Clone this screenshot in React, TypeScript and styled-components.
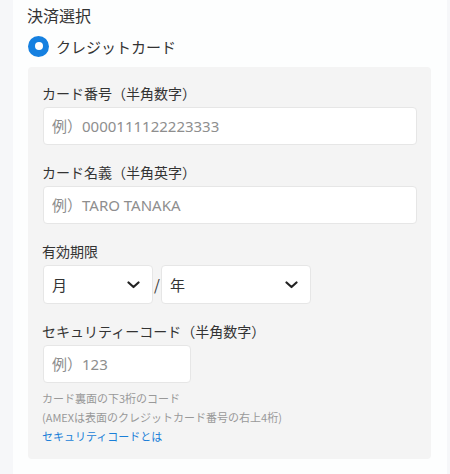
import React from 'react';
import styled, { createGlobalStyle } from 'styled-components';

const GlobalStyle = createGlobalStyle`
  html, body {
    margin: 0;
    padding: 0;
    background: #f6f7f9;
  }
  body {
    font-family: "Noto Sans CJK JP", "Noto Sans", sans-serif;
    color: #333;
  }
`;

const Page = styled.div`
  margin-left: 13px;
  width: 434px;
  min-height: 474px;
  box-sizing: border-box;
  background: #fdfefe;
  padding: 3px 16px 16px 14px;
`;

const Heading = styled.h2`
  margin: 0;
  font-size: 16px;
  line-height: 24px;
  font-weight: 400;
  color: #333;
`;

const RadioRow = styled.label`
  display: flex;
  align-items: center;
  gap: 7px;
  margin: 7px 0 0 1px;
  height: 24px;
  font-size: 15px;
  color: #333;
`;

const RadioDot = styled.span`
  width: 21px;
  height: 21px;
  border-radius: 50%;
  background: #1580e0;
  display: flex;
  align-items: center;
  justify-content: center;
  &::after {
    content: '';
    width: 8px;
    height: 8px;
    border-radius: 50%;
    background: #fff;
  }
`;

const Panel = styled.div`
  margin: 9px 0 0 1px;
  background: #f4f4f4;
  border-radius: 4px;
  padding: 16px 14px 13px 14px;
  display: flex;
  flex-direction: column;
`;

const Field = styled.div<{ $last?: boolean }>`
  display: flex;
  flex-direction: column;
  margin-bottom: ${p => (p.$last ? '0' : '17px')};
`;

const Label = styled.div`
  font-size: 14px;
  line-height: 20px;
  color: #333;
  margin-bottom: 4px;
`;

const Input = styled.input<{ $width?: number }>`
  box-sizing: border-box;
  width: ${p => (p.$width ? `${p.$width}px` : 'calc(100% - 1px)')};
  height: 38px;
  margin-left: 1px;
  border: 1px solid #e6e6e6;
  border-radius: 4px;
  background: #fff;
  padding: 0 8px;
  font-family: "Noto Sans", "Noto Sans CJK JP", sans-serif;
  font-size: 15px;
  color: #333;
  outline: none;
  &::placeholder {
    color: #8e8e8e;
  }
`;

const DateRow = styled.div`
  display: flex;
  align-items: center;
  margin-left: 1px;
`;

const Select = styled.div<{ $width: number }>`
  box-sizing: border-box;
  width: ${p => p.$width}px;
  height: 39px;
  border: 1px solid #e6e6e6;
  border-radius: 4px;
  background: #fff;
  display: flex;
  align-items: center;
  justify-content: space-between;
  padding: 0 12px 0 8px;
  font-size: 15px;
  color: #333;
`;

const Slash = styled.span`
  width: 8px;
  text-align: center;
  font-size: 15px;
  color: #333;
`;

const Help = styled.div`
  margin-top: 6px;
  font-size: 11px;
  line-height: 19px;
  color: #999;
`;

const HelpLink = styled.a`
  display: block;
  color: #1a7fd8;
  text-decoration: none;
`;

const Chevron = () => (
  <svg width="13" height="8" viewBox="0 0 13 8">
    <polyline points="1.5,1.5 6.5,6 11.5,1.5" fill="none" stroke="#222" strokeWidth="2.2" strokeLinecap="round" strokeLinejoin="round" />
  </svg>
);

export default function App() {
  return (
    <>
      <GlobalStyle />
      <Page>
        <Heading>決済選択</Heading>
        <RadioRow>
          <RadioDot />
          クレジットカード
        </RadioRow>
        <Panel>
          <Field>
            <Label>カード番号（半角数字）</Label>
            <Input placeholder="例）0000111122223333" />
          </Field>
          <Field>
            <Label>カード名義（半角英字）</Label>
            <Input placeholder="例）TARO TANAKA" />
          </Field>
          <Field>
            <Label>有効期限</Label>
            <DateRow>
              <Select $width={110}>
                月
                <Chevron />
              </Select>
              <Slash>/</Slash>
              <Select $width={150}>
                年
                <Chevron />
              </Select>
            </DateRow>
          </Field>
          <Field $last>
            <Label>セキュリティーコード（半角数字）</Label>
            <Input $width={148} placeholder="例）123" />
            <Help>
              カード裏面の下3桁のコード
              <br />
              (AMEXは表面のクレジットカード番号の右上4桁)
              <HelpLink href="#">セキュリティコードとは</HelpLink>
            </Help>
          </Field>
        </Panel>
      </Page>
    </>
  );
}
